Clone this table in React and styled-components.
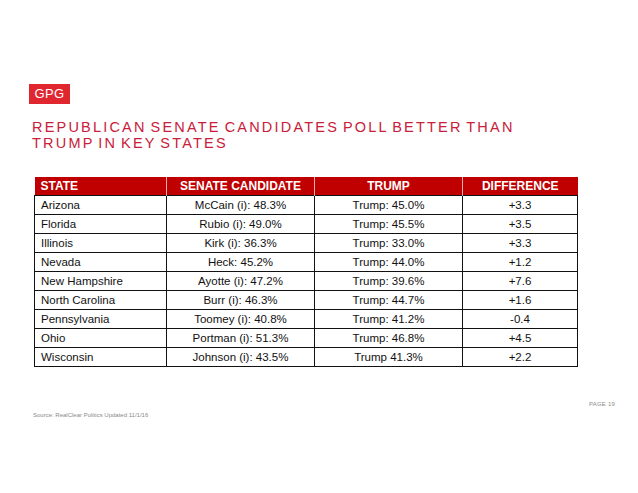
import React from "react";
import styled, { createGlobalStyle } from "styled-components";

const GlobalStyle = createGlobalStyle`
  html, body {
    margin: 0;
    padding: 0;
    background: #ffffff;
    font-family: "Liberation Sans", Arial, sans-serif;
  }
`;

const Slide = styled.div`
  width: 638px;
  height: 493px;
  box-sizing: border-box;
  padding: 84px 0 0 29px;
  display: flex;
  flex-direction: column;
`;

const Logo = styled.div`
  width: 41px;
  height: 20px;
  background: #e0262f;
  color: #ffffff;
  font-size: 13px;
  line-height: 20px;
  text-align: center;
  letter-spacing: 0.3px;
`;

const Title = styled.h1`
  margin: 15px 0 0 3px;
  color: #c8203a;
  font-size: 14.5px;
  font-weight: normal;
  line-height: 16px;
  letter-spacing: 2.2px;
  word-spacing: -2.3px;
  text-transform: uppercase;
`;

const Table = styled.table`
  margin: 26px 0 0 5px;
  width: 543px;
  border-collapse: collapse;
  table-layout: fixed;
  font-size: 11.5px;
  color: #111111;
`;

const HeadCell = styled.th`
  background: #c00000;
  color: #ffffff;
  font-size: 12px;
  font-weight: bold;
  height: 18px;
  padding: 0 6px;
  text-align: ${(p) => (p.$left ? "left" : "center")};
  border-left: 1px solid #e8b0b0;
  &:first-child {
    border-left: none;
  }
`;

const Cell = styled.td`
  height: 18px;
  padding: 0 6px;
  border: 1px solid #111111;
  text-align: ${(p) => (p.$left ? "left" : "center")};
`;

const Footer = styled.div`
  display: flex;
  justify-content: space-between;
  align-items: flex-end;
  margin-top: 34px;
  width: 586px;
  font-size: 6px;
  color: #8a8a8a;
`;

const Source = styled.span`
  padding: 0 0 0 4px;
  transform: translateY(11px);
`;

const Page = styled.span`
  letter-spacing: 0.2px;
`;

const rows = [
  ["Arizona", "McCain (i): 48.3%", "Trump: 45.0%", "+3.3"],
  ["Florida", "Rubio (i): 49.0%", "Trump: 45.5%", "+3.5"],
  ["Illinois", "Kirk (i): 36.3%", "Trump: 33.0%", "+3.3"],
  ["Nevada", "Heck: 45.2%", "Trump: 44.0%", "+1.2"],
  ["New Hampshire", "Ayotte (i): 47.2%", "Trump: 39.6%", "+7.6"],
  ["North Carolina", "Burr (i): 46.3%", "Trump: 44.7%", "+1.6"],
  ["Pennsylvania", "Toomey (i): 40.8%", "Trump: 41.2%", "-0.4"],
  ["Ohio", "Portman (i): 51.3%", "Trump: 46.8%", "+4.5"],
  ["Wisconsin", "Johnson (i): 43.5%", "Trump 41.3%", "+2.2"],
];

export default function App() {
  return (
    <>
      <GlobalStyle />
      <Slide>
        <Logo>GPG</Logo>
        <Title>
          Republican senate candidates poll better than
          <br />
          Trump in key states
        </Title>
        <Table>
          <colgroup>
            <col style={{ width: 132 }} />
            <col style={{ width: 148 }} />
            <col style={{ width: 148 }} />
            <col style={{ width: 115 }} />
          </colgroup>
          <thead>
            <tr>
              <HeadCell $left>STATE</HeadCell>
              <HeadCell>SENATE CANDIDATE</HeadCell>
              <HeadCell>TRUMP</HeadCell>
              <HeadCell>DIFFERENCE</HeadCell>
            </tr>
          </thead>
          <tbody>
            {rows.map((r) => (
              <tr key={r[0]}>
                <Cell $left>{r[0]}</Cell>
                <Cell>{r[1]}</Cell>
                <Cell>{r[2]}</Cell>
                <Cell>{r[3]}</Cell>
              </tr>
            ))}
          </tbody>
        </Table>
        <Footer>
          <Source>Source: RealClear Politics Updated 11/1/16</Source>
          <Page>PAGE 19</Page>
        </Footer>
      </Slide>
    </>
  );
}
